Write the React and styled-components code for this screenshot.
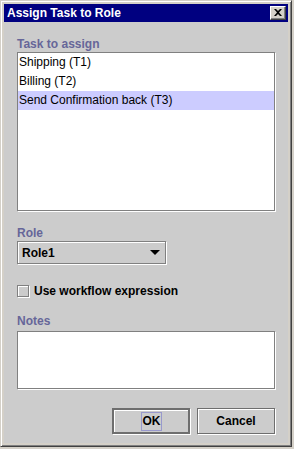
import React from "react";
import styled, { createGlobalStyle } from "styled-components";

const Global = createGlobalStyle`
  html, body { margin: 0; padding: 0; background: #d4d0c8; }
  body { font-family: "Liberation Sans", Arial, sans-serif; font-size: 12px; }
  * { box-sizing: border-box; }
`;

const Window = styled.div`
  width: 292px;
  height: 447px;
  display: flex;
  flex-direction: column;
  background: #d4d0c8;
  border: 1px solid;
  border-color: #d4d0c8 #404040 #404040 #d4d0c8;
  box-shadow: inset 1px 1px 0 #ffffff, inset -1px -1px 0 #808080;
  padding: 3px;
`;

const TitleBar = styled.div`
  height: 18px;
  flex: none;
  background: #000080;
  display: flex;
  align-items: center;
  justify-content: space-between;
  padding: 0 2px 0 3px;
`;

const Title = styled.span`
  color: #ffffff;
  font-weight: bold;
  font-size: 12px;
  line-height: 18px;
`;

const CloseButton = styled.div`
  width: 16px;
  height: 14px;
  background: #d4d0c8;
  border: 1px solid;
  border-color: #ffffff #404040 #404040 #ffffff;
  box-shadow: inset -1px -1px 0 #808080;
  display: flex;
  align-items: center;
  justify-content: center;
  padding: 0 1px 1px 0;
`;

const Panel = styled.div`
  flex: 1;
  background: #cccccc;
  display: flex;
  flex-direction: column;
  padding: 15px 13px 9px 13px;
`;

const SectionLabel = styled.div`
  color: #666699;
  font-weight: bold;
  font-size: 12px;
  line-height: 15px;
  height: 15px;
  margin-top: ${(p) => p.$mt || 0}px;
`;

const WhiteBox = styled.div`
  background: #ffffff;
  border: 1px solid #808080;
  box-shadow: 1px 1px 0 #ffffff;
  height: ${(p) => p.$h}px;
  margin-top: ${(p) => p.$mt || 0}px;
`;

const ListRow = styled.div`
  height: 19px;
  line-height: 19px;
  padding-left: 1px;
  color: #000000;
  font-size: 12px;
  background: ${(p) => (p.$selected ? "#ccccff" : "transparent")};
`;

const Combo = styled.div`
  width: 149px;
  height: 23px;
  border: 1px solid #808080;
  box-shadow: 1px 1px 0 #ffffff, inset 1px 1px 0 #ffffff;
  background: #cccccc;
  display: flex;
  align-items: center;
  justify-content: space-between;
  padding: 0 5px 0 4px;
  font-weight: bold;
  color: #000000;
`;

const CheckRow = styled.label`
  margin-top: 18px;
  height: 17px;
  display: flex;
  align-items: center;
  gap: 5px;
  font-weight: bold;
  color: #000000;
`;

const CheckBox = styled.span`
  width: 12px;
  height: 12px;
  border: 1px solid #808080;
  box-shadow: 1px 1px 0 #ffffff, inset 1px 1px 0 #ffffff;
  background: #cccccc;
  flex: none;
`;

const ButtonRow = styled.div`
  margin-top: 18px;
  display: flex;
  justify-content: flex-end;
  gap: 7px;
`;

const Button = styled.div`
  width: 78px;
  height: 26px;
  border: ${(p) => (p.$default ? "2px" : "1px")} solid #6e6e6e;
  box-shadow: 1px 1px 0 #ffffff, inset 1px 1px 0 #ffffff;
  background: #cccccc;
  display: flex;
  align-items: center;
  justify-content: center;
  font-weight: bold;
  font-size: 12px;
  color: #000000;
`;

const FocusRing = styled.span`
  border: 1px solid #9999cc;
  line-height: 17px;
  padding: 0 0 0 1px;
`;

const Spacer = styled.div`
  flex: 1;
`;

export default function App() {
  const tasks = ["Shipping (T1)", "Billing (T2)", "Send Confirmation back (T3)"];
  return (
    <>
      <Global />
      <Window>
        <TitleBar>
          <Title>Assign Task to Role</Title>
          <CloseButton>
            <svg width="8" height="7" viewBox="0 0 8 7">
              <path d="M0 0h2l2 2 2-2h2L5 3.5 8 7H6L4 5 2 7H0l3-3.5z" fill="#000" />
            </svg>
          </CloseButton>
        </TitleBar>
        <Panel>
          <SectionLabel>Task to assign</SectionLabel>
          <WhiteBox $h={159}>
            {tasks.map((t, i) => (
              <ListRow key={t} $selected={i === 2}>
                {t}
              </ListRow>
            ))}
          </WhiteBox>
          <SectionLabel $mt={15}>Role</SectionLabel>
          <Combo>
            <span>Role1</span>
            <svg width="10" height="5" viewBox="0 0 10 5">
              <path d="M0 0h10L5 5z" fill="#000" />
            </svg>
          </Combo>
          <CheckRow>
            <CheckBox />
            <span>Use workflow expression</span>
          </CheckRow>
          <SectionLabel $mt={15}>Notes</SectionLabel>
          <WhiteBox $h={58} $mt={2} />
          <Spacer />
          <ButtonRow>
            <Button $default>
              <FocusRing>OK</FocusRing>
            </Button>
            <Button>Cancel</Button>
          </ButtonRow>
        </Panel>
      </Window>
    </>
  );
}
